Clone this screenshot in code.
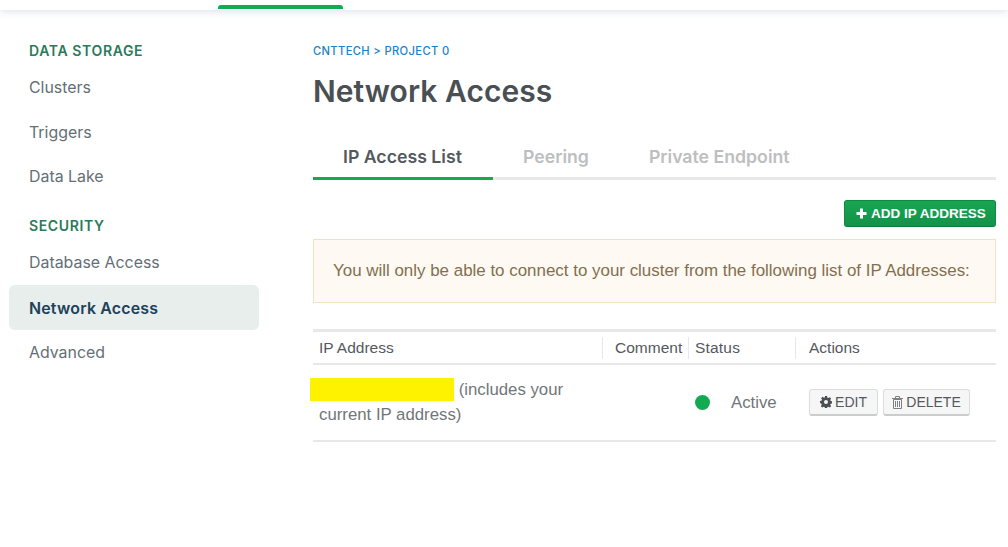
<div class="page">
  <header class="topbar"><span class="toptab"></span></header>
  <div class="body">
    <aside class="side">
      <h3 class="sec first">DATA STORAGE</h3>
      <a class="item i1">Clusters</a>
      <a class="item i2">Triggers</a>
      <a class="item i3">Data Lake</a>
      <h3 class="sec second">SECURITY</h3>
      <a class="item i4">Database Access</a>
      <a class="item active">Network Access</a>
      <a class="item i6">Advanced</a>
    </aside>
    <main class="main">
      <div class="crumb">CNTTECH &gt; PROJECT 0</div>
      <h1 class="title">Network Access</h1>
      <nav class="tabs">
        <span class="tab on">IP Access List</span>
        <span class="tab t2">Peering</span>
        <span class="tab t3">Private Endpoint</span>
      </nav>
      <div class="toolbar">
        <button class="add">
          <svg width="11" height="11" viewBox="0 0 11 11"><path d="M4 0.5h3v3.500h3.500v3h-3.500v3.500h-3v-3.500h-3.500v-3h3.500z" fill="#fff"/></svg>
          ADD IP ADDRESS
        </button>
      </div>
      <div class="notice">You will only be able to connect to your cluster from the following list of IP Addresses:</div>
      <div class="table">
        <div class="row head">
          <div class="th c1">IP Address</div>
          <div class="th c2">Comment</div>
          <div class="th c3">Status</div>
          <div class="th c4">Actions</div>
        </div>
        <div class="row data">
          <div class="cell c1 ip"><span class="redact"></span> (includes your<br />current IP address)</div>
          <div class="cell c2"></div>
          <div class="cell c3 status"><span class="dot"></span>Active</div>
          <div class="cell c4 actions">
            <button class="btn">
              <svg width="12" height="12" viewBox="0 0 24 24"><path fill="#4a4f52" fill-rule="evenodd" d="M10 0h4l.7 3.300 1.900.8 2.900-1.800 2.800 2.800-1.800 2.900.8 1.900 3.300.7v4.200l-3.300.7-.8 1.900 1.800 2.900-2.800 2.800-2.900-1.800-1.900.8-.7 3.300h-4l-.7-3.300-1.900-.8-2.900 1.800-2.800-2.800 1.800-2.900-.8-1.900L0 14.100V9.900l3.300-.7.8-1.900-1.800-2.900 2.800-2.800 2.900 1.800 1.900-.8zM12 8a4 4 0 1 0 0 8 4 4 0 0 0 0-8z"/></svg>
              EDIT
            </button>
            <button class="btn del">
              <svg width="11" height="13" viewBox="0 0 11 13"><path fill="none" stroke="#7c8184" stroke-width="1" d="M1.500 3.500h8v9h-8zM0 2.500h11M3.500 2.500v-2h4v2M3.500 5v6M5.500 5v6M7.500 5v6"/></svg>
              DELETE
            </button>
          </div>
        </div>
      </div>
    </main>
  </div>
</div>

<style>
  :global(body) { margin: 0; background: #fff; }
  .page { width: 1008px; height: 547px; overflow: hidden; font-family: "Liberation Sans", Arial, sans-serif; color: #5d6c74; }
  .topbar { height: 10px; background: #fff; box-shadow: 0 1px 8px rgba(180, 198, 215, 0.55); position: relative; }
  .toptab { position: absolute; left: 218px; width: 125px; top: 5px; height: 4px; background: #13aa52; border-radius: 3px 3px 0 0; }
  .body { display: flex; }
  .side { width: 250px; margin-left: 9px; padding-top: 32px; flex: none; }
  .sec { margin: 0; padding-left: 20px; font: 600 14px/18px Inter, sans-serif; letter-spacing: 0.62px; color: #2a7a5b; }
  .sec.second { margin-top: 20px; }
  .item { display: block; padding-left: 20px; height: 45px; font: 400 15.900px/44px Inter, sans-serif; color: #646f76; }
  .i1 { margin-top: 6px; }
  .i2 { height: 44px; }
  .i3 { height: 42px; }
  .i4 { height: 44px; margin-top: 6px; }
  .active { height: 45px; line-height: 47px; border-radius: 6px; background: #e7eeec; color: #21405a; font-weight: 600; letter-spacing: 0.2px; }
  .i6 { line-height: 45px; }
  .main { margin-left: 54px; width: 683px; flex: none; }
  .crumb { margin-top: 32px; font: 500 11.200px/18px Inter, sans-serif; letter-spacing: 0.35px; color: #1a82c9; }
  .title { margin: 11px 0 0; font: 600 30px/40px Inter, sans-serif; color: #494f53; letter-spacing: 0.05px; }
  .tabs { display: flex; margin-top: 26px; height: 40px; border-bottom: 3px solid #e8e8e8; }
  .tab { font: 600 17.700px/40px Inter, sans-serif; color: #bcbebf; padding: 0 30px; height: 40px; box-sizing: border-box; }
  .tab.on { color: #54595d; border-bottom: 3px solid #13aa52; height: 43px; width: 180px; }
  .toolbar { display: flex; justify-content: flex-end; margin-top: 20px; }
  .add { display: flex; align-items: center; gap: 4px; height: 27px; width: 152px; padding: 0 0 0 11px; box-sizing: border-box; border: 1px solid #0e8a43; border-bottom-color: #0c7a3b; border-radius: 3px; background: linear-gradient(#18a550, #13924a); color: #fff; font: 700 13.500px "Liberation Sans", Arial, sans-serif; white-space: nowrap; }
  .notice { display: flex; align-items: center; margin-top: 12px; height: 64px; box-sizing: border-box; border: 1px solid #f3e1c3; background: #fefaf3; padding: 0 19px; font-size: 16.930px; color: #836f4e; white-space: nowrap; }
  .table { margin-top: 26px; border-top: 3px solid #e8e8e8; }
  .row { display: grid; grid-template-columns: 289px 86px 107px 201px; }
  .head { height: 31px; border-bottom: 2px solid #e8e8e8; align-items: center; }
  .th { font-size: 15.500px; color: #54595d; height: 22px; line-height: 22px; padding-left: 6px; box-sizing: border-box; }
  .head .c2 { border-left: 1px solid #e8e8e8; padding-left: 12px; white-space: nowrap; }
  .head .c3 { border-left: 1px solid #e8e8e8; padding-left: 6px; letter-spacing: 0.2px; }
  .head .c4 { border-left: 1px solid #e8e8e8; padding-left: 13px; }
  .data { height: 75px; border-bottom: 2px solid #e8e8e8; font-size: 16.800px; color: #71767a; align-items: center; }
  .ip { line-height: 24.500px; padding-left: 6px; white-space: nowrap; }
  .redact { display: inline-block; width: 144px; height: 23px; background: #fff200; margin-left: -9px; vertical-align: -6px; }
  .status { display: flex; align-items: center; padding-left: 7px; gap: 21px; }
  .dot { width: 15px; height: 15px; border-radius: 50%; background: #13aa52; }
  .actions { display: flex; gap: 5px; padding-left: 14px; }
  .btn { display: flex; align-items: center; justify-content: center; gap: 3px; height: 27px; width: 69px; padding: 0; box-sizing: border-box; border: 1px solid #dcdcdc; border-bottom: 2px solid #c9cdcd; border-radius: 3px; background: #f6f6f6; color: #54595d; font: 400 14px "Liberation Sans", Arial, sans-serif; }
  .del { width: 87px; }
</style>
